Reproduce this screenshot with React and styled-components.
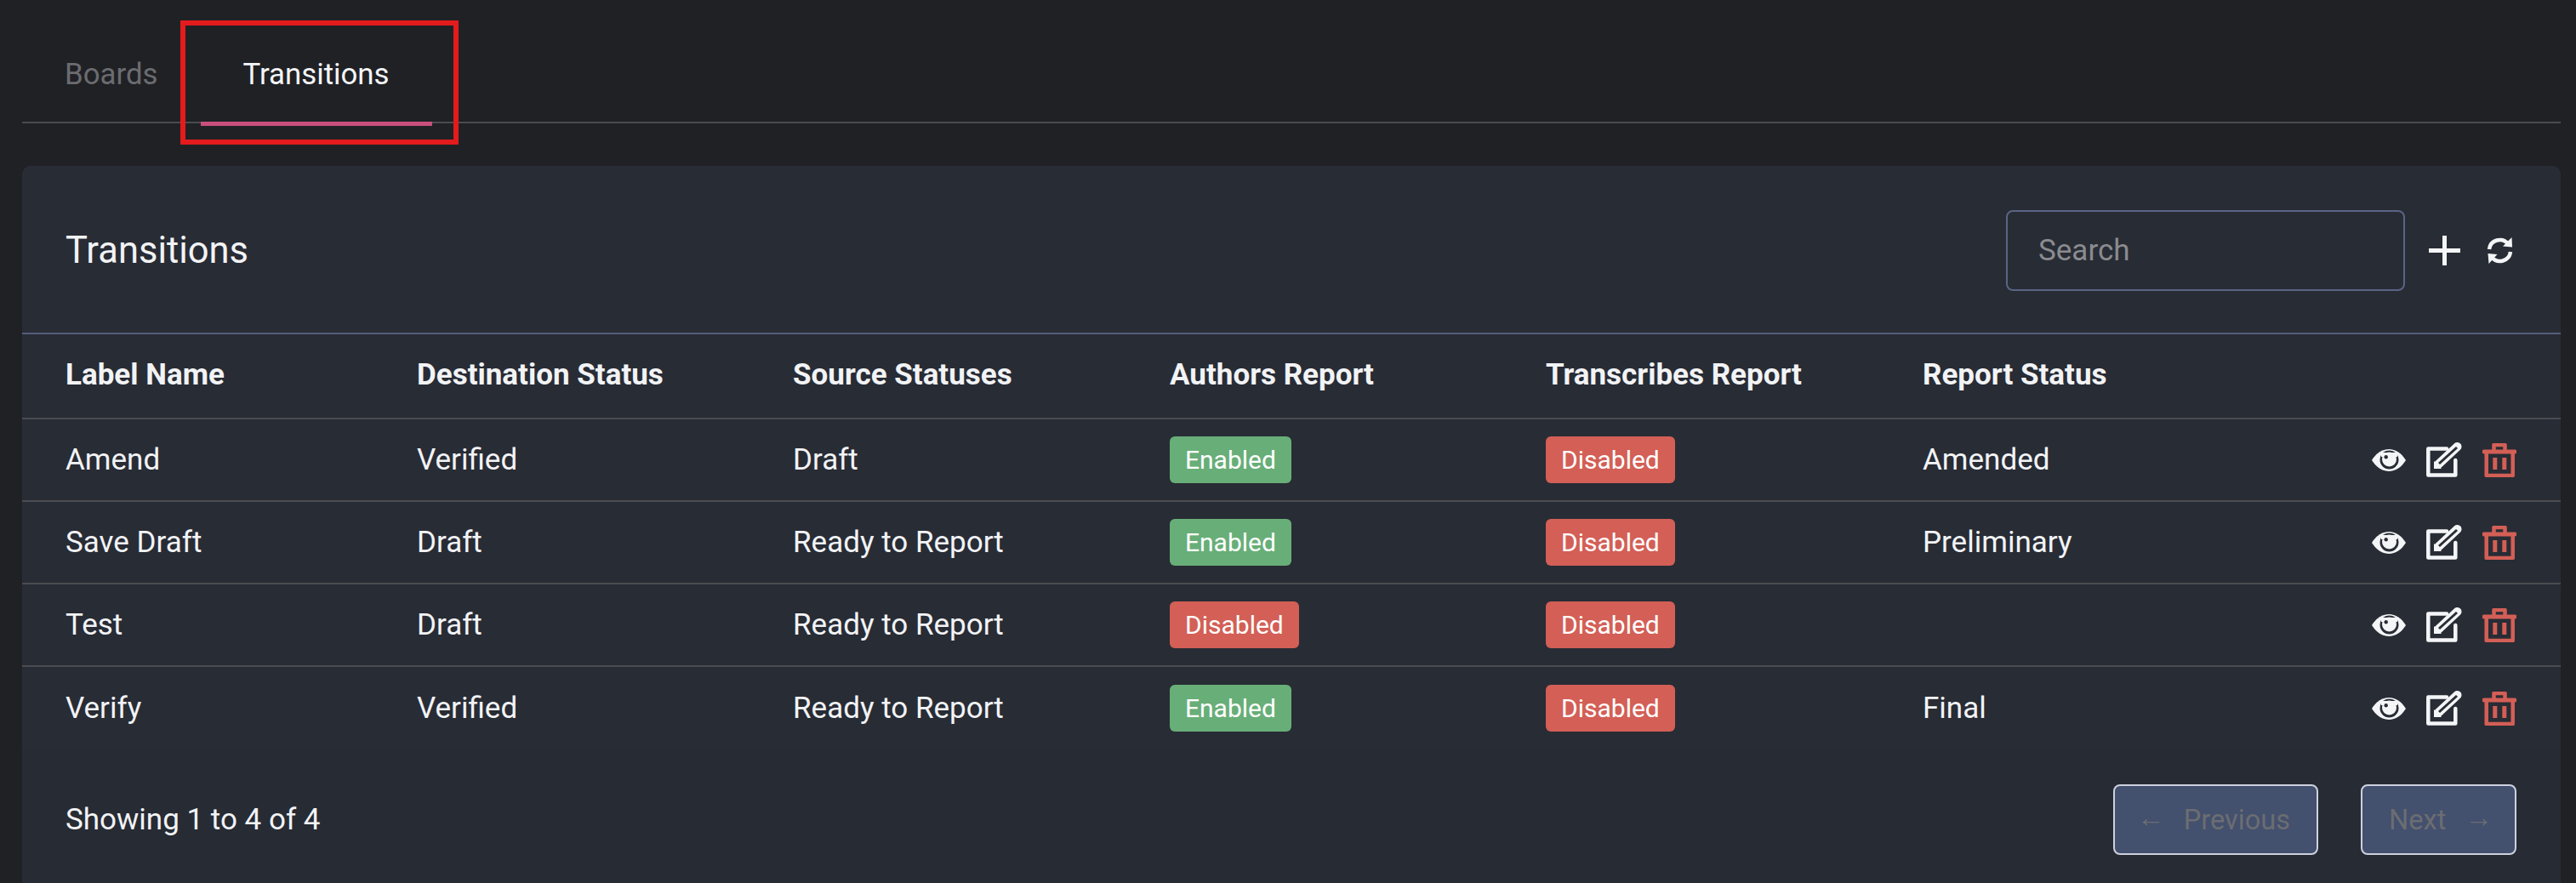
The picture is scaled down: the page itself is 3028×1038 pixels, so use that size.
import React from 'react';
import styled, { createGlobalStyle } from 'styled-components';

const GlobalStyle = createGlobalStyle`
  html, body {
    margin: 0;
    height: 100%;
    overflow: hidden;
    background: #202125;
  }
  body {
    font-family: Roboto, "Liberation Sans", sans-serif;
    color: #f2f3f5;
  }
`

const Page = styled.div`
  position: relative;
  padding: 0 18px 0 26px;
`
const Tabs = styled.div`
  display: flex;
  height: 143px;
  border-bottom: 2px solid #4b4c50;
`
const Tab = styled.div`
  height: 148px;
  box-sizing: border-box;
  padding: 31px 50px 0;
  display: flex;
  align-items: center;
  font-size: 34.8px;
  color: ${props => (props.$active ? '#f4f5f7' : '#6b6c70')};
  border-bottom: 5px solid ${props => (props.$active ? '#c94f7c' : 'transparent')};
`
const Highlight = styled.div`
  position: absolute;
  left: 212px;
  top: 24px;
  width: 327px;
  height: 146px;
  box-sizing: border-box;
  border: 6px solid #e31b1d;
`
const Card = styled.div`
  margin-top: 50px;
  background: #272b34;
  border-radius: 10px 10px 0 0;
  padding-bottom: 60px;
`
const CardHeader = styled.div`
  height: 198px;
  box-sizing: border-box;
  padding: 3px 56px 0 51px;
  display: flex;
  align-items: center;
  justify-content: space-between;
  background: #282c35;
  border-radius: 10px 10px 0 0;
  border-bottom: 2px solid #555e7c;
`
const Title = styled.div`
  font-size: 43.5px;
`
const HeaderTools = styled.div`
  display: flex;
  align-items: center;
`
const Search = styled.input`
  width: 469px;
  height: 95px;
  box-sizing: border-box;
  margin-right: 28px;
  padding: 0 36px;
  background: transparent;
  border: 2px solid #5a6484;
  border-radius: 8px;
  font-family: inherit;
  font-size: 35px;
  color: #f2f3f5;
  &::placeholder {
    color: #8a8b8f;
  }
`
const ToolIcon = styled.svg`
  display: block;
  margin-right: ${props => props.$gap || 0}px;
`
const Table = styled.table`
  width: 100%;
  table-layout: fixed;
  border-collapse: separate;
  border-spacing: 0;
`
const Th = styled.th`
  box-sizing: border-box;
  height: 100px;
  padding: 0 0 3px 26px;
  text-align: left;
  font-size: 35px;
  font-weight: 700;
  background: #282c35;
  border-bottom: 2px solid #4b4c50;
  &:first-child {
    padding-left: 51px;
  }
`
const Td = styled.td`
  box-sizing: border-box;
  height: 97px;
  padding: 0 0 0 26px;
  font-size: 35px;
  background: #282c35;
  border-bottom: 2px solid #4b4c50;
  &:first-child {
    padding-left: 51px;
  }
  tr:last-child > & {
    border-bottom: none;
  }
`
const Badge = styled.span`
  display: inline-block;
  vertical-align: middle;
  height: 55px;
  line-height: 55px;
  padding: 0 18px;
  border-radius: 6px;
  font-size: 30px;
  color: #fff;
  background: ${props => (props.$on ? '#68ae78' : '#d35f56')};
`
const Actions = styled.div`
  display: flex;
  align-items: center;
  justify-content: flex-end;
  padding-right: 52px;
  gap: 24px;
`
const Footer = styled.div`
  display: flex;
  align-items: center;
  justify-content: space-between;
  padding: 41px 52px 0 51px;
`
const Showing = styled.div`
  font-size: 35px;
`
const Pager = styled.div`
  display: flex;
  gap: 50px;
`
const PageButton = styled.div`
  height: 83px;
  box-sizing: border-box;
  padding: ${props => (props.$next ? '0 26px 0 31px' : '0 31px 0 26px')};
  display: flex;
  align-items: center;
  gap: 22px;
  background: #43506e;
  border: 2px solid #cdd1de;
  border-radius: 8px;
  font-size: 32.6px;
  color: #6b6d72;
`
const Arrow = styled.span`
  margin-bottom: 6px;
`

const EyeIcon = () => (
  <svg width="40" height="26" viewBox="0 0 40 26">
    <path fill="#f4f5f7" d="M0 13C5 5 12 0 20 0s15 5 20 13c-5 8-12 13-20 13S5 21 0 13z" />
    <circle cx="20.5" cy="12.5" r="11" fill="#282c35" />
    <circle cx="20.5" cy="12" r="8.5" fill="#f4f5f7" />
    <path fill="#f4f5f7" d="M11 4h19v5H11z" />
    <circle cx="16.7" cy="9.3" r="2.2" fill="#282c35" />
  </svg>
)
const EditIcon = () => (
  <svg width="42" height="41" viewBox="0 0 42 41" fill="none" strokeLinecap="round">
    <path stroke="#f4f5f7" strokeWidth="4.5" strokeLinejoin="round" d="M24 7.5H2.3v31h32V21" />
    <path stroke="#f4f5f7" strokeWidth="10" d="M14 26 36.5 5" />
    <path fill="#f4f5f7" d="M9 31v-9l9 9z" />
    <path stroke="#282c35" strokeWidth="3" strokeLinecap="butt" d="M15 25 36 6" />
  </svg>
)
const TrashIcon = () => (
  <svg width="40" height="40" viewBox="0 0 40 40" fill="none" stroke="#d35f56" strokeWidth="4.5" strokeLinejoin="round">
    <path strokeLinecap="round" d="M2 10h36" strokeWidth="5" />
    <path d="M13.5 9V2h13v7" />
    <path d="M4.7 11v27h31V11" />
    <path d="M14.8 17v14M25.8 17v14" strokeWidth="5" />
  </svg>
)

const rows = [
  { label: 'Amend', dest: 'Verified', source: 'Draft', authors: true, transcribes: false, status: 'Amended' },
  { label: 'Save Draft', dest: 'Draft', source: 'Ready to Report', authors: true, transcribes: false, status: 'Preliminary' },
  { label: 'Test', dest: 'Draft', source: 'Ready to Report', authors: false, transcribes: false, status: '' },
  { label: 'Verify', dest: 'Verified', source: 'Ready to Report', authors: true, transcribes: false, status: 'Final' },
];

const StatusBadge = ({ on }) => <Badge $on={on}>{on ? 'Enabled' : 'Disabled'}</Badge>

const App = () => (
  <Page>
    <GlobalStyle />
    <Tabs>
      <Tab>Boards</Tab>
      <Tab $active>Transitions</Tab>
    </Tabs>
    <Highlight />
    <Card>
      <CardHeader>
        <Title>Transitions</Title>
        <HeaderTools>
          <Search placeholder="Search" />
          <ToolIcon $gap={31} width="37" height="35" viewBox="0 0 37 35">
            <path fill="#f4f5f7" d="M16 0h5v15h16v5H21v15h-5V20H0v-5h16z" />
          </ToolIcon>
          <ToolIcon width="31" height="31" viewBox="0 0 31 31" fill="none" stroke="#f4f5f7" strokeWidth="4.5">
            <path d="M3 14A12.5 12.5 0 0 1 25 7.5" />
            <path d="M28 17A12.5 12.5 0 0 1 6 23.5" />
            <path fill="#f4f5f7" stroke="none" d="M29.5 0l.5 11.5-11-1zM1.5 19l11 1L2.5 31z" />
          </ToolIcon>
        </HeaderTools>
      </CardHeader>
      <Table>
        <colgroup>
          <col style={{ width: 438 }} />
          <col style={{ width: 442 }} />
          <col style={{ width: 443 }} />
          <col style={{ width: 442 }} />
          <col style={{ width: 443 }} />
          <col style={{ width: 443 }} />
          <col />
        </colgroup>
        <thead>
          <tr>
            <Th>Label Name</Th>
            <Th>Destination Status</Th>
            <Th>Source Statuses</Th>
            <Th>Authors Report</Th>
            <Th>Transcribes Report</Th>
            <Th>Report Status</Th>
            <Th />
          </tr>
        </thead>
        <tbody>
          {rows.map(row => (
            <tr key={row.label}>
              <Td>{row.label}</Td>
              <Td>{row.dest}</Td>
              <Td>{row.source}</Td>
              <Td><StatusBadge on={row.authors} /></Td>
              <Td><StatusBadge on={row.transcribes} /></Td>
              <Td>{row.status}</Td>
              <Td>
                <Actions>
                  <EyeIcon />
                  <EditIcon />
                  <TrashIcon />
                </Actions>
              </Td>
            </tr>
          ))}
        </tbody>
      </Table>
      <Footer>
        <Showing>Showing 1 to 4 of 4</Showing>
        <Pager>
          <PageButton><Arrow>←</Arrow><span>Previous</span></PageButton>
          <PageButton $next><span>Next</span><Arrow>→</Arrow></PageButton>
        </Pager>
      </Footer>
    </Card>
  </Page>
);

export default App;
